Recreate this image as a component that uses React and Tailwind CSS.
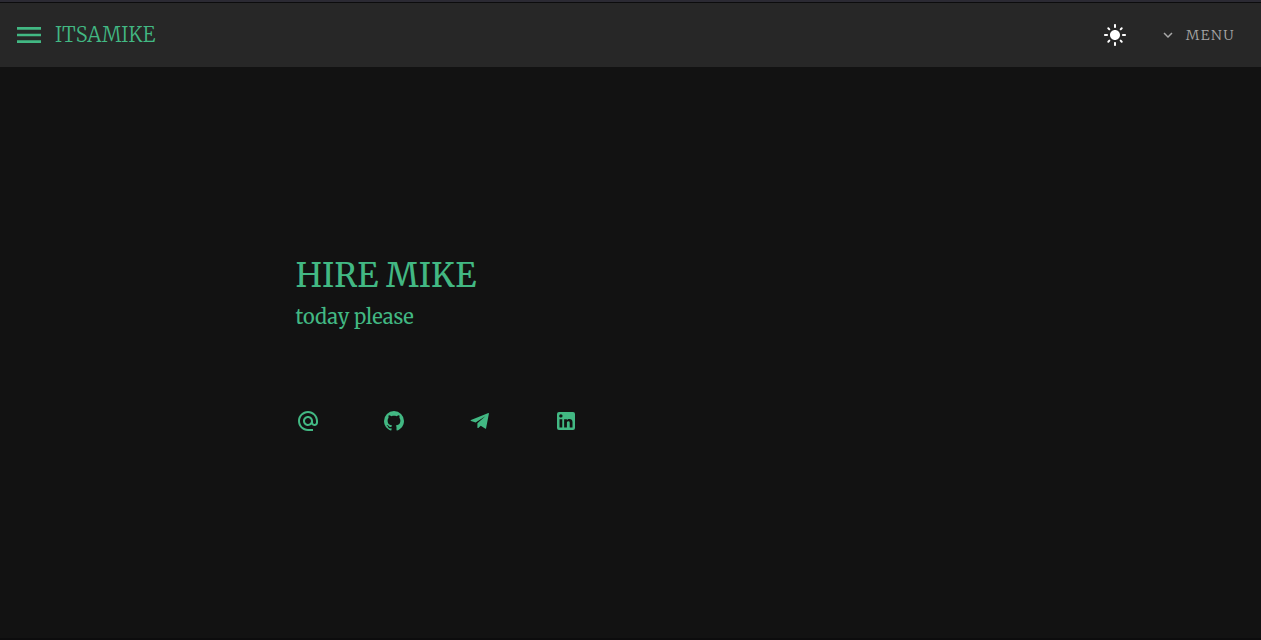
import { MdAlternateEmail, MdLightMode } from "react-icons/md";

function Icon({ d, className = "size-6" }) {
  return (
    <svg viewBox="0 0 24 24" fill="currentColor" className={className} aria-hidden="true">
      <path d={d} />
    </svg>
  );
}

const paths = {
  menu: "M3 6H21V8H3V6M3 11H21V13H3V11M3 16H21V18H3V16Z",
  chevron: "M7.41 8.58L12 13.17L16.59 8.58L18 10L12 16L6 10L7.41 8.58Z",
  github:
    "M12,2A10,10 0 0,0 2,12C2,16.42 4.87,20.17 8.84,21.5C9.34,21.58 9.5,21.27 9.5,21C9.5,20.77 9.5,20.14 9.5,19.31C6.73,19.91 6.14,17.97 6.14,17.97C5.68,16.81 5.03,16.5 5.03,16.5C4.12,15.88 5.1,15.9 5.1,15.9C6.1,15.97 6.63,16.93 6.63,16.93C7.5,18.45 8.97,18 9.54,17.76C9.63,17.11 9.89,16.67 10.17,16.42C7.95,16.17 5.62,15.31 5.62,11.5C5.62,10.39 6,9.5 6.65,8.79C6.55,8.54 6.2,7.5 6.75,6.15C6.75,6.15 7.59,5.88 9.5,7.17C10.29,6.95 11.15,6.84 12,6.84C12.85,6.84 13.71,6.95 14.5,7.17C16.41,5.88 17.25,6.15 17.25,6.15C17.8,7.5 17.45,8.54 17.35,8.79C18,9.5 18.38,10.39 18.38,11.5C18.38,15.32 16.04,16.16 13.81,16.41C14.17,16.72 14.5,17.33 14.5,18.26C14.5,19.6 14.5,20.68 14.5,21C14.5,21.27 14.66,21.59 15.17,21.5C19.14,20.16 22,16.42 22,12A10,10 0 0,0 12,2Z",
  plane:
    "M20.4 4.1Q21 4 20.9 4.7L18.1 19.2Q17.8 20.1 17.1 19.6L12.7 16.7L10.4 18.9Q9.4 19.2 9.4 18.4V14.2L17.3 7.2L7.7 13.4L3 11.9Q2 11.4 3 10.9Z",
  linkedin:
    "M19 3A2 2 0 0 1 21 5V19A2 2 0 0 1 19 21H5A2 2 0 0 1 3 19V5A2 2 0 0 1 5 3H19M18.5 18.5V13.2A3.26 3.26 0 0 0 15.24 9.94C14.39 9.94 13.4 10.46 12.92 11.24V10.13H10.13V18.5H12.92V13.57C12.92 12.8 13.54 12.17 14.31 12.17A1.4 1.4 0 0 1 15.71 13.57V18.5H18.5M6.88 8.56A1.68 1.68 0 0 0 8.56 6.88C8.56 5.95 7.81 5.19 6.88 5.19A1.69 1.69 0 0 0 5.19 6.88C5.19 7.81 5.95 8.56 6.88 8.56M8.27 18.5V10.13H5.5V18.5H8.27Z",
};

export default function App() {
  return (
    <div className="flex min-h-screen flex-col border-t-2 border-b-2 border-t-[#2b2a33] border-b-[#0c0c0d] bg-[#121212] font-['Merriweather','Liberation_Serif',serif] text-[#42b883]">
      <header className="flex h-[65px] shrink-0 items-center border-t border-[#0c0c0d] bg-[#272727] pr-[26px] pl-[13px]">
        <button type="button" aria-label="Open navigation" className="mr-2.5">
          <Icon d={paths.menu} className="size-8" />
        </button>
        <a href="#home" className="text-xl leading-8 font-light">ITSAMIKE</a>
        <button type="button" aria-label="Toggle theme" className="ml-auto text-white">
          <MdLightMode className="size-6" />
        </button>
        <button type="button" className="ml-8 flex items-center gap-[9px] text-sm leading-6 font-light tracking-widest text-[#a8a8a8]">
          <Icon d={paths.chevron} className="size-[18px]" />
          MENU
        </button>
      </header>
      <main className="mx-auto flex w-full max-w-[670px] flex-1 flex-col justify-center pb-[17px]">
        <h1 className="text-[33px] leading-10">HIRE MIKE</h1>
        <p className="mt-px text-xl leading-10">today please</p>
        <nav aria-label="Contact" className="mt-[72px] flex gap-[62px]">
          <a href="#email" aria-label="Email"><MdAlternateEmail className="size-6" /></a>
          <a href="#github" aria-label="GitHub"><Icon d={paths.github} /></a>
          <a href="#telegram" aria-label="Telegram"><Icon d={paths.plane} /></a>
          <a href="#linkedin" aria-label="LinkedIn"><Icon d={paths.linkedin} /></a>
        </nav>
      </main>
    </div>
  );
}
